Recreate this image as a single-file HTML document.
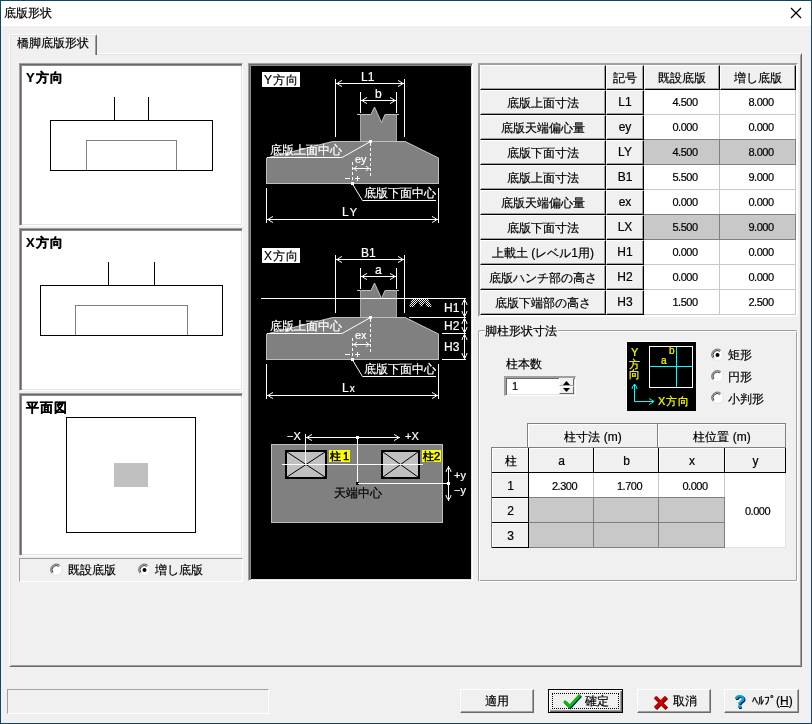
<!DOCTYPE html>
<html><head><meta charset="utf-8"><style>
*{box-sizing:border-box}
html,body{margin:0;padding:0}
body{will-change:transform;width:812px;height:724px;position:relative;overflow:hidden;background:#f0f0f0;font-family:"Liberation Sans",sans-serif;font-size:12px;color:#000}
.a{position:absolute}
.t{-webkit-text-stroke:0.2px;position:absolute;line-height:12px;white-space:nowrap}
.n{font-size:11px;letter-spacing:-0.5px}
.c{-webkit-text-stroke:0.2px;position:absolute;white-space:nowrap;text-align:center;line-height:12px}
svg{position:absolute;left:0;top:0}
</style></head><body>
<div class="a" style="left:0px;top:0px;width:812px;height:724px;border:1px solid #0e4766"></div>
<div class="a" style="left:1px;top:1px;width:810px;height:25px;background:#fff"></div>
<div class="t" style="left:4px;top:7px;">底版形状</div>
<div class="a" style="left:9px;top:53px;width:793px;height:614px;border-style:solid;border-width:1px;border-color:#fff #696969 #696969 #fff;box-shadow:inset 1px 1px 0 #e3e3e3,inset -1px -1px 0 #a0a0a0"></div>
<div class="a" style="left:9px;top:34px;width:88px;height:21px;background:#f0f0f0;border-style:solid;border-width:1px 1px 0 1px;border-color:#fff #696969 #fff #fff;box-shadow:inset 1px 1px 0 #e3e3e3,inset -1px 0 0 #a0a0a0;border-radius:2px 2px 0 0"></div>
<div class="t" style="left:17px;top:37px;">橋脚底版形状</div>
<div class="a" style="left:19px;top:63px;width:224px;height:163px;background:#fff;border-style:solid;border-width:1px;border-color:#a0a0a0 #fff #fff #a0a0a0;box-shadow:inset 1px 1px 0 #696969,inset 2px 2px 0 #8c8c8c,inset -1px -1px 0 #e3e3e3"></div>
<div class="t" style="left:26px;top:72px;font-weight:bold;font-size:13px;letter-spacing:1px">Y方向</div>
<div class="a" style="left:19px;top:228px;width:224px;height:163px;background:#fff;border-style:solid;border-width:1px;border-color:#a0a0a0 #fff #fff #a0a0a0;box-shadow:inset 1px 1px 0 #696969,inset 2px 2px 0 #8c8c8c,inset -1px -1px 0 #e3e3e3"></div>
<div class="t" style="left:26px;top:237px;font-weight:bold;font-size:13px;letter-spacing:1px">X方向</div>
<div class="a" style="left:19px;top:393px;width:224px;height:163px;background:#fff;border-style:solid;border-width:1px;border-color:#a0a0a0 #fff #fff #a0a0a0;box-shadow:inset 1px 1px 0 #696969,inset 2px 2px 0 #8c8c8c,inset -1px -1px 0 #e3e3e3"></div>
<div class="t" style="left:26px;top:402px;font-weight:bold;font-size:13px;letter-spacing:1px">平面図</div>
<div class="a" style="left:19px;top:558px;width:224px;height:24px;border:1px solid;border-color:#a0a0a0 #fff #fff #a0a0a0"></div>
<div class="t" style="left:68px;top:564px;">既設底版</div>
<div class="t" style="left:155px;top:564px;">増し底版</div>
<div class="a" style="left:248px;top:63px;width:225px;height:518px;background:#000;border-style:solid;border-width:1px;border-color:#a0a0a0 #fff #fff #a0a0a0;box-shadow:inset 1px 1px 0 #696969,inset 2px 2px 0 #8c8c8c,inset -1px -1px 0 #e3e3e3"></div>
<div class="a" style="left:478px;top:63px;width:320px;height:254px;border-style:solid;border-width:2px 2px 2px 2px;border-color:#a0a0a0 #fff #fff #a0a0a0;box-shadow:inset 1px 1px 0 #696969,inset -1px -1px 0 #e3e3e3;background:#f0f0f0"></div>
<div class="a" style="left:480px;top:65px;width:126px;height:25px;background:#f0f0f0;border-style:solid;border-width:1px 1px 1px 1px;border-color:#fff #000 #000 #fff;box-shadow:inset -1px -1px 0 #a0a0a0"></div>
<div class="a" style="left:606px;top:65px;width:38px;height:25px;background:#f0f0f0;border-style:solid;border-width:1px 1px 1px 1px;border-color:#fff #000 #000 #fff;box-shadow:inset -1px -1px 0 #a0a0a0"></div>
<div class="c " style="left:606px;top:72px;width:38px">記号</div>
<div class="a" style="left:644px;top:65px;width:76px;height:25px;background:#f0f0f0;border-style:solid;border-width:1px 1px 1px 1px;border-color:#fff #000 #000 #fff;box-shadow:inset -1px -1px 0 #a0a0a0"></div>
<div class="c " style="left:644px;top:72px;width:76px">既設底版</div>
<div class="a" style="left:720px;top:65px;width:76px;height:25px;background:#f0f0f0;border-style:solid;border-width:1px 1px 1px 1px;border-color:#fff #000 #000 #fff;box-shadow:inset -1px -1px 0 #a0a0a0"></div>
<div class="c " style="left:720px;top:72px;width:76px">増し底版</div>
<div class="a" style="left:480px;top:90px;width:126px;height:25px;background:#f0f0f0;border-style:solid;border-width:1px 1px 1px 1px;border-color:#fff #000 #000 #fff;box-shadow:inset -1px -1px 0 #a0a0a0"></div>
<div class="c " style="left:480px;top:97px;width:126px">底版上面寸法</div>
<div class="a" style="left:606px;top:90px;width:38px;height:25px;background:#f0f0f0;border-style:solid;border-width:1px 1px 1px 1px;border-color:#fff #000 #000 #fff;box-shadow:inset -1px -1px 0 #a0a0a0"></div>
<div class="c " style="left:606px;top:96px;width:38px">L1</div>
<div class="a" style="left:644px;top:90px;width:76px;height:25px;background:#fff;border-right:1px solid #c8c8c8;border-bottom:1px solid #c8c8c8"></div>
<div class="c n" style="left:647px;top:96px;width:76px">4.500</div>
<div class="a" style="left:720px;top:90px;width:76px;height:25px;background:#fff;border-right:1px solid #c8c8c8;border-bottom:1px solid #c8c8c8"></div>
<div class="c n" style="left:723px;top:96px;width:76px">8.000</div>
<div class="a" style="left:480px;top:115px;width:126px;height:25px;background:#f0f0f0;border-style:solid;border-width:1px 1px 1px 1px;border-color:#fff #000 #000 #fff;box-shadow:inset -1px -1px 0 #a0a0a0"></div>
<div class="c " style="left:480px;top:122px;width:126px">底版天端偏心量</div>
<div class="a" style="left:606px;top:115px;width:38px;height:25px;background:#f0f0f0;border-style:solid;border-width:1px 1px 1px 1px;border-color:#fff #000 #000 #fff;box-shadow:inset -1px -1px 0 #a0a0a0"></div>
<div class="c " style="left:606px;top:121px;width:38px">ey</div>
<div class="a" style="left:644px;top:115px;width:76px;height:25px;background:#fff;border-right:1px solid #c8c8c8;border-bottom:1px solid #c8c8c8"></div>
<div class="c n" style="left:647px;top:121px;width:76px">0.000</div>
<div class="a" style="left:720px;top:115px;width:76px;height:25px;background:#fff;border-right:1px solid #c8c8c8;border-bottom:1px solid #c8c8c8"></div>
<div class="c n" style="left:723px;top:121px;width:76px">0.000</div>
<div class="a" style="left:480px;top:140px;width:126px;height:25px;background:#f0f0f0;border-style:solid;border-width:1px 1px 1px 1px;border-color:#fff #000 #000 #fff;box-shadow:inset -1px -1px 0 #a0a0a0"></div>
<div class="c " style="left:480px;top:147px;width:126px">底版下面寸法</div>
<div class="a" style="left:606px;top:140px;width:38px;height:25px;background:#f0f0f0;border-style:solid;border-width:1px 1px 1px 1px;border-color:#fff #000 #000 #fff;box-shadow:inset -1px -1px 0 #a0a0a0"></div>
<div class="c " style="left:606px;top:146px;width:38px">LY</div>
<div class="a" style="left:644px;top:140px;width:76px;height:25px;background:#c8c8c8;border-right:1px solid #808080;border-bottom:1px solid #808080"></div>
<div class="c n" style="left:647px;top:146px;width:76px">4.500</div>
<div class="a" style="left:720px;top:140px;width:76px;height:25px;background:#c8c8c8;border-right:1px solid #808080;border-bottom:1px solid #808080"></div>
<div class="c n" style="left:723px;top:146px;width:76px">8.000</div>
<div class="a" style="left:644px;top:139px;width:152px;height:1px;background:#808080"></div>
<div class="a" style="left:480px;top:165px;width:126px;height:25px;background:#f0f0f0;border-style:solid;border-width:1px 1px 1px 1px;border-color:#fff #000 #000 #fff;box-shadow:inset -1px -1px 0 #a0a0a0"></div>
<div class="c " style="left:480px;top:172px;width:126px">底版上面寸法</div>
<div class="a" style="left:606px;top:165px;width:38px;height:25px;background:#f0f0f0;border-style:solid;border-width:1px 1px 1px 1px;border-color:#fff #000 #000 #fff;box-shadow:inset -1px -1px 0 #a0a0a0"></div>
<div class="c " style="left:606px;top:171px;width:38px">B1</div>
<div class="a" style="left:644px;top:165px;width:76px;height:25px;background:#fff;border-right:1px solid #c8c8c8;border-bottom:1px solid #c8c8c8"></div>
<div class="c n" style="left:647px;top:171px;width:76px">5.500</div>
<div class="a" style="left:720px;top:165px;width:76px;height:25px;background:#fff;border-right:1px solid #c8c8c8;border-bottom:1px solid #c8c8c8"></div>
<div class="c n" style="left:723px;top:171px;width:76px">9.000</div>
<div class="a" style="left:480px;top:190px;width:126px;height:25px;background:#f0f0f0;border-style:solid;border-width:1px 1px 1px 1px;border-color:#fff #000 #000 #fff;box-shadow:inset -1px -1px 0 #a0a0a0"></div>
<div class="c " style="left:480px;top:197px;width:126px">底版天端偏心量</div>
<div class="a" style="left:606px;top:190px;width:38px;height:25px;background:#f0f0f0;border-style:solid;border-width:1px 1px 1px 1px;border-color:#fff #000 #000 #fff;box-shadow:inset -1px -1px 0 #a0a0a0"></div>
<div class="c " style="left:606px;top:196px;width:38px">ex</div>
<div class="a" style="left:644px;top:190px;width:76px;height:25px;background:#fff;border-right:1px solid #c8c8c8;border-bottom:1px solid #c8c8c8"></div>
<div class="c n" style="left:647px;top:196px;width:76px">0.000</div>
<div class="a" style="left:720px;top:190px;width:76px;height:25px;background:#fff;border-right:1px solid #c8c8c8;border-bottom:1px solid #c8c8c8"></div>
<div class="c n" style="left:723px;top:196px;width:76px">0.000</div>
<div class="a" style="left:480px;top:215px;width:126px;height:25px;background:#f0f0f0;border-style:solid;border-width:1px 1px 1px 1px;border-color:#fff #000 #000 #fff;box-shadow:inset -1px -1px 0 #a0a0a0"></div>
<div class="c " style="left:480px;top:222px;width:126px">底版下面寸法</div>
<div class="a" style="left:606px;top:215px;width:38px;height:25px;background:#f0f0f0;border-style:solid;border-width:1px 1px 1px 1px;border-color:#fff #000 #000 #fff;box-shadow:inset -1px -1px 0 #a0a0a0"></div>
<div class="c " style="left:606px;top:221px;width:38px">LX</div>
<div class="a" style="left:644px;top:215px;width:76px;height:25px;background:#c8c8c8;border-right:1px solid #808080;border-bottom:1px solid #808080"></div>
<div class="c n" style="left:647px;top:221px;width:76px">5.500</div>
<div class="a" style="left:720px;top:215px;width:76px;height:25px;background:#c8c8c8;border-right:1px solid #808080;border-bottom:1px solid #808080"></div>
<div class="c n" style="left:723px;top:221px;width:76px">9.000</div>
<div class="a" style="left:644px;top:214px;width:152px;height:1px;background:#808080"></div>
<div class="a" style="left:480px;top:240px;width:126px;height:25px;background:#f0f0f0;border-style:solid;border-width:1px 1px 1px 1px;border-color:#fff #000 #000 #fff;box-shadow:inset -1px -1px 0 #a0a0a0"></div>
<div class="c " style="left:480px;top:247px;width:126px">上載土 (レベル1用)</div>
<div class="a" style="left:606px;top:240px;width:38px;height:25px;background:#f0f0f0;border-style:solid;border-width:1px 1px 1px 1px;border-color:#fff #000 #000 #fff;box-shadow:inset -1px -1px 0 #a0a0a0"></div>
<div class="c " style="left:606px;top:246px;width:38px">H1</div>
<div class="a" style="left:644px;top:240px;width:76px;height:25px;background:#fff;border-right:1px solid #c8c8c8;border-bottom:1px solid #c8c8c8"></div>
<div class="c n" style="left:647px;top:246px;width:76px">0.000</div>
<div class="a" style="left:720px;top:240px;width:76px;height:25px;background:#fff;border-right:1px solid #c8c8c8;border-bottom:1px solid #c8c8c8"></div>
<div class="c n" style="left:723px;top:246px;width:76px">0.000</div>
<div class="a" style="left:480px;top:265px;width:126px;height:25px;background:#f0f0f0;border-style:solid;border-width:1px 1px 1px 1px;border-color:#fff #000 #000 #fff;box-shadow:inset -1px -1px 0 #a0a0a0"></div>
<div class="c " style="left:480px;top:272px;width:126px">底版ハンチ部の高さ</div>
<div class="a" style="left:606px;top:265px;width:38px;height:25px;background:#f0f0f0;border-style:solid;border-width:1px 1px 1px 1px;border-color:#fff #000 #000 #fff;box-shadow:inset -1px -1px 0 #a0a0a0"></div>
<div class="c " style="left:606px;top:271px;width:38px">H2</div>
<div class="a" style="left:644px;top:265px;width:76px;height:25px;background:#fff;border-right:1px solid #c8c8c8;border-bottom:1px solid #c8c8c8"></div>
<div class="c n" style="left:647px;top:271px;width:76px">0.000</div>
<div class="a" style="left:720px;top:265px;width:76px;height:25px;background:#fff;border-right:1px solid #c8c8c8;border-bottom:1px solid #c8c8c8"></div>
<div class="c n" style="left:723px;top:271px;width:76px">0.000</div>
<div class="a" style="left:480px;top:290px;width:126px;height:25px;background:#f0f0f0;border-style:solid;border-width:1px 1px 1px 1px;border-color:#fff #000 #000 #fff;box-shadow:inset -1px -1px 0 #a0a0a0"></div>
<div class="c " style="left:480px;top:297px;width:126px">底版下端部の高さ</div>
<div class="a" style="left:606px;top:290px;width:38px;height:25px;background:#f0f0f0;border-style:solid;border-width:1px 1px 1px 1px;border-color:#fff #000 #000 #fff;box-shadow:inset -1px -1px 0 #a0a0a0"></div>
<div class="c " style="left:606px;top:296px;width:38px">H3</div>
<div class="a" style="left:644px;top:290px;width:76px;height:25px;background:#fff;border-right:1px solid #c8c8c8;border-bottom:1px solid #c8c8c8"></div>
<div class="c n" style="left:647px;top:296px;width:76px">1.500</div>
<div class="a" style="left:720px;top:290px;width:76px;height:25px;background:#fff;border-right:1px solid #c8c8c8;border-bottom:1px solid #c8c8c8"></div>
<div class="c n" style="left:723px;top:296px;width:76px">2.500</div>
<div class="a" style="left:478px;top:330px;width:320px;height:252px;border:1px solid;border-color:#a0a0a0 #fff #fff #a0a0a0;box-shadow:inset 1px 1px 0 #fff,inset -1px -1px 0 #a0a0a0;border-radius:2px"></div>
<div class="t" style="left:485px;top:325px;background:#f0f0f0;padding:0 1px 0 0">脚柱形状寸法</div>
<div class="t" style="left:506px;top:358px;">柱本数</div>
<div class="a" style="left:504px;top:376px;width:72px;height:20px;background:#fff;border-style:solid;border-width:2px 1px 1px 2px;border-color:#a0a0a0 #fff #fff #a0a0a0;box-shadow:inset 1px 1px 0 #696969,inset -1px -1px 0 #e3e3e3"></div>
<div class="t" style="left:512px;top:380px;font-size:11px">1</div>
<div class="a" style="left:559px;top:378px;width:15px;height:8px;background:#f0f0f0;border:1px solid;border-color:#f0f0f0 #696969 #a0a0a0 #fff"></div>
<div class="a" style="left:559px;top:386px;width:15px;height:8px;background:#f0f0f0;border:1px solid;border-color:#fff #696969 #696969 #fff"></div>
<div class="a" style="left:626px;top:341px;width:70px;height:70px;background:#000;border-top:1px solid #fff;border-left:1px solid #fff"></div>
<div class="t" style="left:728px;top:349px;">矩形</div>
<div class="t" style="left:728px;top:371px;">円形</div>
<div class="t" style="left:728px;top:393px;">小判形</div>
<div class="a" style="left:527px;top:423px;width:259px;height:1px;background:#808080"></div>
<div class="a" style="left:527px;top:423px;width:1px;height:25px;background:#808080"></div>
<div class="a" style="left:491px;top:447px;width:37px;height:1px;background:#808080"></div>
<div class="a" style="left:491px;top:447px;width:1px;height:101px;background:#808080"></div>
<div class="a" style="left:528px;top:424px;width:130px;height:24px;background:#f0f0f0;border-right:1px solid #808080;border-bottom:1px solid #808080;box-shadow:inset 1px 1px 0 #fff;"></div>
<div class="c " style="left:528px;top:431px;width:130px">柱寸法 (m)</div>
<div class="a" style="left:658px;top:424px;width:128px;height:24px;background:#f0f0f0;border-right:1px solid #808080;border-bottom:1px solid #808080;box-shadow:inset 1px 1px 0 #fff;"></div>
<div class="c " style="left:658px;top:431px;width:128px">柱位置 (m)</div>
<div class="a" style="left:492px;top:448px;width:37px;height:25px;background:#f0f0f0;border-right:1px solid #000;border-bottom:1px solid #000;box-shadow:inset 1px 1px 0 #fff;"></div>
<div class="c " style="left:492px;top:455px;width:37px">柱</div>
<div class="a" style="left:529px;top:448px;width:65px;height:25px;background:#f0f0f0;border-right:1px solid #000;border-bottom:1px solid #000;box-shadow:inset 1px 1px 0 #fff;"></div>
<div class="c " style="left:529px;top:455px;width:65px">a</div>
<div class="a" style="left:594px;top:448px;width:65px;height:25px;background:#f0f0f0;border-right:1px solid #000;border-bottom:1px solid #000;box-shadow:inset 1px 1px 0 #fff;"></div>
<div class="c " style="left:594px;top:455px;width:65px">b</div>
<div class="a" style="left:659px;top:448px;width:66px;height:25px;background:#f0f0f0;border-right:1px solid #000;border-bottom:1px solid #000;box-shadow:inset 1px 1px 0 #fff;"></div>
<div class="c " style="left:659px;top:455px;width:66px">x</div>
<div class="a" style="left:725px;top:448px;width:61px;height:25px;background:#f0f0f0;border-right:1px solid #000;border-bottom:1px solid #000;box-shadow:inset 1px 1px 0 #fff;"></div>
<div class="c " style="left:725px;top:455px;width:61px">y</div>
<div class="a" style="left:492px;top:473px;width:37px;height:25px;background:#f0f0f0;border-right:1px solid #000;border-bottom:1px solid #000;box-shadow:inset 1px 1px 0 #fff;"></div>
<div class="c " style="left:492px;top:480px;width:37px">1</div>
<div class="a" style="left:529px;top:473px;width:65px;height:25px;background:#fff;border-right:1px solid #c8c8c8;border-bottom:1px solid #c8c8c8;"></div>
<div class="c n" style="left:532px;top:480px;width:65px">2.300</div>
<div class="a" style="left:594px;top:473px;width:65px;height:25px;background:#fff;border-right:1px solid #c8c8c8;border-bottom:1px solid #c8c8c8;"></div>
<div class="c n" style="left:597px;top:480px;width:65px">1.700</div>
<div class="a" style="left:659px;top:473px;width:66px;height:25px;background:#fff;border-right:1px solid #c8c8c8;border-bottom:1px solid #c8c8c8;"></div>
<div class="c n" style="left:662px;top:480px;width:66px">0.000</div>
<div class="a" style="left:492px;top:498px;width:37px;height:25px;background:#f0f0f0;border-right:1px solid #000;border-bottom:1px solid #000;box-shadow:inset 1px 1px 0 #fff;"></div>
<div class="c " style="left:492px;top:505px;width:37px">2</div>
<div class="a" style="left:529px;top:498px;width:65px;height:25px;background:#c8c8c8;border-right:1px solid #808080;border-bottom:1px solid #808080;"></div>
<div class="a" style="left:594px;top:498px;width:65px;height:25px;background:#c8c8c8;border-right:1px solid #808080;border-bottom:1px solid #808080;"></div>
<div class="a" style="left:659px;top:498px;width:66px;height:25px;background:#c8c8c8;border-right:1px solid #808080;border-bottom:1px solid #808080;"></div>
<div class="a" style="left:529px;top:497px;width:196px;height:1px;background:#808080"></div>
<div class="a" style="left:492px;top:523px;width:37px;height:25px;background:#f0f0f0;border-right:1px solid #000;border-bottom:1px solid #000;box-shadow:inset 1px 1px 0 #fff;"></div>
<div class="c " style="left:492px;top:530px;width:37px">3</div>
<div class="a" style="left:529px;top:523px;width:65px;height:25px;background:#c8c8c8;border-right:1px solid #808080;border-bottom:1px solid #808080;"></div>
<div class="a" style="left:594px;top:523px;width:65px;height:25px;background:#c8c8c8;border-right:1px solid #808080;border-bottom:1px solid #808080;"></div>
<div class="a" style="left:659px;top:523px;width:66px;height:25px;background:#c8c8c8;border-right:1px solid #808080;border-bottom:1px solid #808080;"></div>
<div class="a" style="left:725px;top:473px;width:61px;height:75px;background:#fff;border-right:1px solid #e3e3e3;border-bottom:1px solid #e3e3e3;"></div>
<div class="c n" style="left:727px;top:505px;width:61px">0.000</div>
<div class="a" style="left:7px;top:689px;width:262px;height:25px;border:1px solid;border-color:#a0a0a0 #fff #fff #a0a0a0"></div>
<div class="a" style="left:460px;top:689px;width:74px;height:24px;background:#f0f0f0;border-style:solid;border-width:1px;border-color:#fff #696969 #696969 #fff;box-shadow:inset -1px -1px 0 #a0a0a0"></div>
<div class="t" style="left:485px;top:695px;">適用</div>
<div class="a" style="left:548px;top:689px;width:75px;height:24px;background:#f0f0f0;border:1px solid #000;box-shadow:inset 1px 1px 0 #fff,inset -1px -1px 0 #696969,inset -2px -2px 0 #a0a0a0"></div>
<div class="a" style="left:552px;top:693px;width:67px;height:16px;border:1px dotted #000"></div>
<div class="t" style="left:585px;top:695px;">確定</div>
<div class="a" style="left:637px;top:689px;width:74px;height:24px;background:#f0f0f0;border-style:solid;border-width:1px;border-color:#fff #696969 #696969 #fff;box-shadow:inset -1px -1px 0 #a0a0a0"></div>
<div class="t" style="left:673px;top:695px;">取消</div>
<div class="a" style="left:724px;top:689px;width:75px;height:24px;background:#f0f0f0;border-style:solid;border-width:1px;border-color:#fff #696969 #696969 #fff;box-shadow:inset -1px -1px 0 #a0a0a0"></div>
<div class="t" style="left:752px;top:695px;">ﾍﾙﾌﾟ(<u>H</u>)</div>
<svg width="812" height="724" viewBox="0 0 812 724" style="position:absolute;left:0;top:0"><line x1="791" y1="8" x2="801" y2="18" stroke="#000" stroke-width="1.2" /><line x1="801" y1="8" x2="791" y2="18" stroke="#000" stroke-width="1.2" /><line x1="114.5" y1="97" x2="114.5" y2="120" stroke="#000" stroke-width="1" /><line x1="148.5" y1="97" x2="148.5" y2="120" stroke="#000" stroke-width="1" /><rect x="86.5" y="140.5" width="90" height="30" fill="none" stroke="#808080" stroke-width="1"/><rect x="50.5" y="120.5" width="162" height="50" fill="none" stroke="#000" stroke-width="1"/><line x1="108.5" y1="262" x2="108.5" y2="285" stroke="#000" stroke-width="1" /><line x1="154.5" y1="262" x2="154.5" y2="285" stroke="#000" stroke-width="1" /><rect x="75.5" y="305.5" width="112" height="30" fill="none" stroke="#808080" stroke-width="1"/><rect x="40.5" y="285.5" width="182" height="50" fill="none" stroke="#000" stroke-width="1"/><rect x="66.5" y="417.5" width="129" height="115" fill="none" stroke="#000" stroke-width="1"/><rect x="114" y="463" width="34" height="24" fill="#c0c0c0" stroke="none" stroke-width="1"/><rect x="262" y="72" width="38" height="15" fill="#fff" stroke="none" stroke-width="1"/><line x1="335.5" y1="79" x2="335.5" y2="137" stroke="#fff" stroke-width="1" /><line x1="404.5" y1="79" x2="404.5" y2="137" stroke="#fff" stroke-width="1" /><line x1="336" y1="83.5" x2="404" y2="83.5" stroke="#fff" stroke-width="1" /><polyline points="342,80.5 340,81.5 337,83.5 340,85.5 342,86.5" stroke="#fff" stroke-width="1" fill="none" /><polyline points="398,80.5 400,81.5 403,83.5 400,85.5 398,86.5" stroke="#fff" stroke-width="1" fill="none" /><line x1="360.5" y1="92" x2="360.5" y2="113" stroke="#fff" stroke-width="1" /><line x1="396.5" y1="92" x2="396.5" y2="113" stroke="#fff" stroke-width="1" /><line x1="361" y1="100.5" x2="396" y2="100.5" stroke="#fff" stroke-width="1" /><polyline points="367,97.5 365,98.5 362,100.5 365,102.5 367,103.5" stroke="#fff" stroke-width="1" fill="none" /><polyline points="390,97.5 392,98.5 395,100.5 392,102.5 390,103.5" stroke="#fff" stroke-width="1" fill="none" /><polygon points="266,158 333,141 405,141 439,158 439,184 266,184" fill="#808080" stroke="none" stroke-width="1"/><polyline points="266.5,184 266.5,158 333,141.5 405,141.5 438.5,158 438.5,183.5 266,183.5" stroke="#c0c0c0" stroke-width="1" fill="none" /><polygon points="360,114 371,114 374.5,107 381.5,122.5 385,114 397,114 397,141 360,141" fill="#808080" stroke="none" stroke-width="1"/><polyline points="357,114.5 371,114.5 374.5,107 381.5,122.5 385,114.5 399,114.5" stroke="#c0c0c0" stroke-width="1" fill="none" /><line x1="360.5" y1="114" x2="360.5" y2="141" stroke="#a8a8a8" stroke-width="1" /><line x1="396.5" y1="114" x2="396.5" y2="141" stroke="#a8a8a8" stroke-width="1" /><polyline points="267,157.5 342,157.5 370.5,141.5" stroke="#fff" stroke-width="1" fill="none" /><rect x="369" y="140" width="3" height="3" fill="#fff" stroke="none" stroke-width="1"/><line x1="370.5" y1="143" x2="370.5" y2="176" stroke="#fff" stroke-width="1" stroke-dasharray="3,2"/><line x1="353" y1="168.5" x2="370" y2="168.5" stroke="#fff" stroke-width="1" /><polyline points="357,166 354,168.5 357,171" stroke="#fff" stroke-width="1" fill="none" /><polyline points="366,166 369,168.5 366,171" stroke="#fff" stroke-width="1" fill="none" /><line x1="352.5" y1="162" x2="352.5" y2="183" stroke="#fff" stroke-width="1" stroke-dasharray="3,2"/><line x1="345" y1="178.5" x2="350" y2="178.5" stroke="#fff" stroke-width="1" /><line x1="355" y1="178.5" x2="360" y2="178.5" stroke="#fff" stroke-width="1" /><line x1="357.5" y1="176" x2="357.5" y2="181" stroke="#fff" stroke-width="1" /><rect x="351" y="182" width="3" height="3" fill="#fff" stroke="none" stroke-width="1"/><polyline points="352.5,184 362.5,200.5 436,200.5" stroke="#fff" stroke-width="1" fill="none" /><line x1="266.5" y1="188" x2="266.5" y2="223" stroke="#fff" stroke-width="1" /><line x1="438.5" y1="188" x2="438.5" y2="223" stroke="#fff" stroke-width="1" /><line x1="267" y1="219.5" x2="438" y2="219.5" stroke="#fff" stroke-width="1" /><polyline points="273,216.5 271,217.5 268,219.5 271,221.5 273,222.5" stroke="#fff" stroke-width="1" fill="none" /><polyline points="432,216.5 434,217.5 437,219.5 434,221.5 432,222.5" stroke="#fff" stroke-width="1" fill="none" /><rect x="262" y="248" width="38" height="15" fill="#fff" stroke="none" stroke-width="1"/><line x1="335.5" y1="255" x2="335.5" y2="313" stroke="#fff" stroke-width="1" /><line x1="404.5" y1="255" x2="404.5" y2="313" stroke="#fff" stroke-width="1" /><line x1="336" y1="259.5" x2="404" y2="259.5" stroke="#fff" stroke-width="1" /><polyline points="342,256.5 340,257.5 337,259.5 340,261.5 342,262.5" stroke="#fff" stroke-width="1" fill="none" /><polyline points="398,256.5 400,257.5 403,259.5 400,261.5 398,262.5" stroke="#fff" stroke-width="1" fill="none" /><line x1="360.5" y1="268" x2="360.5" y2="289" stroke="#fff" stroke-width="1" /><line x1="396.5" y1="268" x2="396.5" y2="289" stroke="#fff" stroke-width="1" /><line x1="361" y1="276.5" x2="396" y2="276.5" stroke="#fff" stroke-width="1" /><polyline points="367,273.5 365,274.5 362,276.5 365,278.5 367,279.5" stroke="#fff" stroke-width="1" fill="none" /><polyline points="390,273.5 392,274.5 395,276.5 392,278.5 390,279.5" stroke="#fff" stroke-width="1" fill="none" /><polygon points="266,334 333,317 405,317 439,334 439,360 266,360" fill="#808080" stroke="none" stroke-width="1"/><polyline points="266.5,360 266.5,334 333,317.5 405,317.5 438.5,334 438.5,359.5 266,359.5" stroke="#c0c0c0" stroke-width="1" fill="none" /><polygon points="360,290 371,290 374.5,283 381.5,298.5 385,290 397,290 397,317 360,317" fill="#808080" stroke="none" stroke-width="1"/><polyline points="357,290.5 371,290.5 374.5,283 381.5,298.5 385,290.5 399,290.5" stroke="#c0c0c0" stroke-width="1" fill="none" /><line x1="360.5" y1="290" x2="360.5" y2="317" stroke="#a8a8a8" stroke-width="1" /><line x1="396.5" y1="290" x2="396.5" y2="317" stroke="#a8a8a8" stroke-width="1" /><polyline points="267,333.5 342,333.5 370.5,317.5" stroke="#fff" stroke-width="1" fill="none" /><rect x="369" y="316" width="3" height="3" fill="#fff" stroke="none" stroke-width="1"/><line x1="370.5" y1="319" x2="370.5" y2="352" stroke="#fff" stroke-width="1" stroke-dasharray="3,2"/><line x1="353" y1="344.5" x2="370" y2="344.5" stroke="#fff" stroke-width="1" /><polyline points="357,342 354,344.5 357,347" stroke="#fff" stroke-width="1" fill="none" /><polyline points="366,342 369,344.5 366,347" stroke="#fff" stroke-width="1" fill="none" /><line x1="352.5" y1="338" x2="352.5" y2="359" stroke="#fff" stroke-width="1" stroke-dasharray="3,2"/><line x1="345" y1="354.5" x2="350" y2="354.5" stroke="#fff" stroke-width="1" /><line x1="355" y1="354.5" x2="360" y2="354.5" stroke="#fff" stroke-width="1" /><line x1="357.5" y1="352" x2="357.5" y2="357" stroke="#fff" stroke-width="1" /><rect x="351" y="358" width="3" height="3" fill="#fff" stroke="none" stroke-width="1"/><polyline points="352.5,360 362.5,376.5 436,376.5" stroke="#fff" stroke-width="1" fill="none" /><line x1="266.5" y1="364" x2="266.5" y2="399" stroke="#fff" stroke-width="1" /><line x1="438.5" y1="364" x2="438.5" y2="399" stroke="#fff" stroke-width="1" /><line x1="267" y1="395.5" x2="438" y2="395.5" stroke="#fff" stroke-width="1" /><polyline points="273,392.5 271,393.5 268,395.5 271,397.5 273,398.5" stroke="#fff" stroke-width="1" fill="none" /><polyline points="432,392.5 434,393.5 437,395.5 434,397.5 432,398.5" stroke="#fff" stroke-width="1" fill="none" /><line x1="261" y1="298.5" x2="466" y2="298.5" stroke="#fff" stroke-width="1" /><line x1="409" y1="317.5" x2="466" y2="317.5" stroke="#fff" stroke-width="1" /><line x1="442" y1="333.5" x2="466" y2="333.5" stroke="#fff" stroke-width="1" /><line x1="442" y1="359.5" x2="466" y2="359.5" stroke="#fff" stroke-width="1" /><line x1="464.5" y1="299" x2="464.5" y2="359" stroke="#fff" stroke-width="1" /><polyline points="462.0,305 462.5,303 464.5,300 466.5,303 467.0,305" stroke="#fff" stroke-width="1" fill="none" /><rect x="463.5" y="300" width="2" height="2" fill="#fff" stroke="none" stroke-width="1"/><polyline points="462.0,324 462.5,322 464.5,319 466.5,322 467.0,324" stroke="#fff" stroke-width="1" fill="none" /><rect x="463.5" y="319" width="2" height="2" fill="#fff" stroke="none" stroke-width="1"/><polyline points="462.0,340 462.5,338 464.5,335 466.5,338 467.0,340" stroke="#fff" stroke-width="1" fill="none" /><rect x="463.5" y="335" width="2" height="2" fill="#fff" stroke="none" stroke-width="1"/><polyline points="462.0,311 462.5,313 464.5,316 466.5,313 467.0,311" stroke="#fff" stroke-width="1" fill="none" /><rect x="463.5" y="314" width="2" height="2" fill="#fff" stroke="none" stroke-width="1"/><polyline points="462.0,327 462.5,329 464.5,332 466.5,329 467.0,327" stroke="#fff" stroke-width="1" fill="none" /><rect x="463.5" y="330" width="2" height="2" fill="#fff" stroke="none" stroke-width="1"/><polyline points="462.0,353 462.5,355 464.5,358 466.5,355 467.0,353" stroke="#fff" stroke-width="1" fill="none" /><rect x="463.5" y="356" width="2" height="2" fill="#fff" stroke="none" stroke-width="1"/><defs><pattern id="chk" width="2" height="2" patternUnits="userSpaceOnUse"><rect x="0" y="0" width="1" height="1" fill="#fff"/><rect x="1" y="1" width="1" height="1" fill="#fff"/></pattern></defs><polygon points="409,307 412,299 428,299 432,307" fill="url(#chk)" stroke="none" stroke-width="1"/><polygon points="414,307 418,301 421,307" fill="#000" stroke="none" stroke-width="1"/><polygon points="422,307 425,302 427,307" fill="#000" stroke="none" stroke-width="1"/><rect x="271.5" y="444.5" width="171" height="78" fill="#808080" stroke="#c0c0c0" stroke-width="1"/><rect x="286" y="451" width="40" height="27" fill="#c0c0c0" stroke="#000" stroke-width="2"/><line x1="287" y1="452" x2="325" y2="477" stroke="#000" stroke-width="1" /><line x1="325" y1="452" x2="287" y2="477" stroke="#000" stroke-width="1" /><rect x="382" y="451" width="37" height="27" fill="#c0c0c0" stroke="#000" stroke-width="2"/><line x1="383" y1="452" x2="418" y2="477" stroke="#000" stroke-width="1" /><line x1="418" y1="452" x2="383" y2="477" stroke="#000" stroke-width="1" /><rect x="329" y="450" width="21" height="12" fill="#ffff00" stroke="none" stroke-width="1"/><rect x="422" y="450" width="19" height="12" fill="#ffff00" stroke="none" stroke-width="1"/><line x1="282" y1="464.5" x2="423" y2="464.5" stroke="#fff" stroke-width="1" /><line x1="305.5" y1="434" x2="305.5" y2="464" stroke="#fff" stroke-width="1" /><line x1="306" y1="437.5" x2="400" y2="437.5" stroke="#fff" stroke-width="1" /><polyline points="312,434.5 310,435.5 307,437.5 310,439.5 312,440.5" stroke="#fff" stroke-width="1" fill="none" /><polyline points="394,434.5 396,435.5 399,437.5 396,439.5 394,440.5" stroke="#fff" stroke-width="1" fill="none" /><rect x="356" y="436" width="3" height="3" fill="#fff" stroke="none" stroke-width="1"/><line x1="357.5" y1="437" x2="357.5" y2="483" stroke="#fff" stroke-width="1" /><rect x="356" y="482" width="3" height="3" fill="#000" stroke="none" stroke-width="1"/><line x1="358" y1="483.5" x2="448" y2="483.5" stroke="#fff" stroke-width="1" /><line x1="448.5" y1="466" x2="448.5" y2="501" stroke="#fff" stroke-width="1" /><polyline points="446.0,472 446.5,470 448.5,467 450.5,470 451.0,472" stroke="#fff" stroke-width="1" fill="none" /><polyline points="446.0,495 446.5,497 448.5,500 450.5,497 451.0,495" stroke="#fff" stroke-width="1" fill="none" /><rect x="447" y="482" width="3" height="3" fill="#fff" stroke="none" stroke-width="1"/><rect x="649.5" y="346.5" width="43" height="41" fill="none" stroke="#fff" stroke-width="1"/><line x1="676.5" y1="347" x2="676.5" y2="387" stroke="#00ffff" stroke-width="1" /><line x1="650" y1="366.5" x2="692" y2="366.5" stroke="#00ffff" stroke-width="1" /><line x1="634.5" y1="384" x2="634.5" y2="401.5" stroke="#00ffff" stroke-width="1" /><line x1="634" y1="401.5" x2="654" y2="401.5" stroke="#00ffff" stroke-width="1" /><polyline points="632.0,389 632.5,387 634.5,384 636.5,387 637.0,389" stroke="#00ffff" stroke-width="1" fill="none" /><polyline points="649,398.5 651,399.5 654,401.5 651,403.5 649,404.5" stroke="#00ffff" stroke-width="1" fill="none" /><circle cx="56.5" cy="570" r="5.5" fill="#fff" stroke="#e3e3e3" stroke-width="1"/><path d="M 52.0 573.2 A 5.5 5.5 0 0 1 59.7 565.5" stroke="#808080" stroke-width="1.3" fill="none"/><path d="M 52.9 572.4 A 4.3 4.3 0 0 1 58.9 566.4" stroke="#404040" stroke-width="1" fill="none"/><circle cx="144.5" cy="570" r="5.5" fill="#fff" stroke="#e3e3e3" stroke-width="1"/><path d="M 140.0 573.2 A 5.5 5.5 0 0 1 147.7 565.5" stroke="#808080" stroke-width="1.3" fill="none"/><path d="M 140.9 572.4 A 4.3 4.3 0 0 1 146.9 566.4" stroke="#404040" stroke-width="1" fill="none"/><circle cx="144.5" cy="570" r="2" fill="#000"/><circle cx="717.5" cy="355" r="5.5" fill="#fff" stroke="#e3e3e3" stroke-width="1"/><path d="M 713.0 358.2 A 5.5 5.5 0 0 1 720.7 350.5" stroke="#808080" stroke-width="1.3" fill="none"/><path d="M 713.9 357.4 A 4.3 4.3 0 0 1 719.9 351.4" stroke="#404040" stroke-width="1" fill="none"/><circle cx="717.5" cy="355" r="2" fill="#000"/><circle cx="717.5" cy="376.5" r="5.5" fill="#fff" stroke="#e3e3e3" stroke-width="1"/><path d="M 713.0 379.7 A 5.5 5.5 0 0 1 720.7 372.0" stroke="#808080" stroke-width="1.3" fill="none"/><path d="M 713.9 378.9 A 4.3 4.3 0 0 1 719.9 372.9" stroke="#404040" stroke-width="1" fill="none"/><circle cx="717.5" cy="398" r="5.5" fill="#fff" stroke="#e3e3e3" stroke-width="1"/><path d="M 713.0 401.2 A 5.5 5.5 0 0 1 720.7 393.5" stroke="#808080" stroke-width="1.3" fill="none"/><path d="M 713.9 400.4 A 4.3 4.3 0 0 1 719.9 394.4" stroke="#404040" stroke-width="1" fill="none"/><polygon points="563,385 566.5,381 570,385" fill="#000" stroke="none" stroke-width="1"/><polygon points="563,388 566.5,392 570,388" fill="#000" stroke="none" stroke-width="1"/><polyline points="565,702 569.5,706.5 579,696" stroke="#000080" stroke-width="3" fill="none" stroke-linecap="square" transform="translate(0.8,0.8)"/><polyline points="565,702 569.5,706.5 579,696" stroke="#00c000" stroke-width="2.8" fill="none" stroke-linecap="square"/><line x1="655" y1="697" x2="666" y2="708" stroke="#600000" stroke-width="3.5" transform="translate(0.8,0.8)"/><line x1="666" y1="697" x2="655" y2="708" stroke="#600000" stroke-width="3.5" transform="translate(0.8,0.8)"/><line x1="655" y1="697" x2="666" y2="708" stroke="#c00000" stroke-width="3.2" /><line x1="666" y1="697" x2="655" y2="708" stroke="#c00000" stroke-width="3.2" /></svg>
<div class="t" style="left:264px;top:74px;letter-spacing:1px">Y方向</div>
<div class="t" style="left:361px;top:71px;color:#fff">L1</div>
<div class="t" style="left:375px;top:88px;color:#fff">b</div>
<div class="t" style="left:270px;top:144px;color:#fff">底版上面中心</div>
<div class="t" style="left:355px;top:153px;color:#fff;font-size:11px">ey</div>
<div class="t" style="left:364px;top:187px;color:#fff">底版下面中心</div>
<div class="t" style="left:342px;top:206px;color:#fff;letter-spacing:1px">L<span style="font-size:11px">Y</span></div>
<div class="t" style="left:264px;top:250px;letter-spacing:1px">X方向</div>
<div class="t" style="left:361px;top:247px;color:#fff">B1</div>
<div class="t" style="left:375px;top:264px;color:#fff">a</div>
<div class="t" style="left:270px;top:320px;color:#fff">底版上面中心</div>
<div class="t" style="left:355px;top:329px;color:#fff;font-size:11px">e<span style="font-size:10px">x</span></div>
<div class="t" style="left:364px;top:363px;color:#fff">底版下面中心</div>
<div class="t" style="left:342px;top:382px;color:#fff;letter-spacing:1px">L<span style="font-size:10px">x</span></div>
<div class="t" style="left:444px;top:302px;color:#fff">H1</div>
<div class="t" style="left:444px;top:320px;color:#fff">H2</div>
<div class="t" style="left:444px;top:341px;color:#fff">H3</div>
<div class="t" style="left:287px;top:430px;color:#fff;font-size:11px">−X</div>
<div class="t" style="left:405px;top:430px;color:#fff;font-size:11px">+X</div>
<div class="t" style="left:454px;top:469px;color:#fff;font-size:11px">+y</div>
<div class="t" style="left:454px;top:484px;color:#fff;font-size:11px">−y</div>
<div class="t" style="left:334px;top:487px;">天端中心</div>
<div class="t" style="left:330px;top:450px;-webkit-text-stroke:0.5px;font-size:11px;letter-spacing:-0.5px">柱 1</div>
<div class="t" style="left:423px;top:450px;-webkit-text-stroke:0.5px;font-size:11px">柱2</div>
<div class="t" style="left:669px;top:346px;color:#ffff00;font-size:10px;line-height:10px">b</div>
<div class="t" style="left:661px;top:356px;color:#ffff00;font-size:10px;line-height:10px">a</div>
<div class="t" style="left:631px;top:347px;color:#ffff00;font-size:11px;line-height:11px">Y</div>
<div class="t" style="left:629px;top:359px;color:#ffff00;font-size:11px;line-height:11px">方</div>
<div class="t" style="left:629px;top:369px;color:#ffff00;font-size:11px;line-height:11px">向</div>
<div class="t" style="left:658px;top:396px;color:#ffff00;font-size:11px;line-height:11px;letter-spacing:1px">X方向</div>
<div class="t" style="left:734px;top:693px;font-size:19px;font-weight:bold;color:#00a8c8;text-shadow:1px 1px #000060;line-height:18px">?</div>
</body></html>
